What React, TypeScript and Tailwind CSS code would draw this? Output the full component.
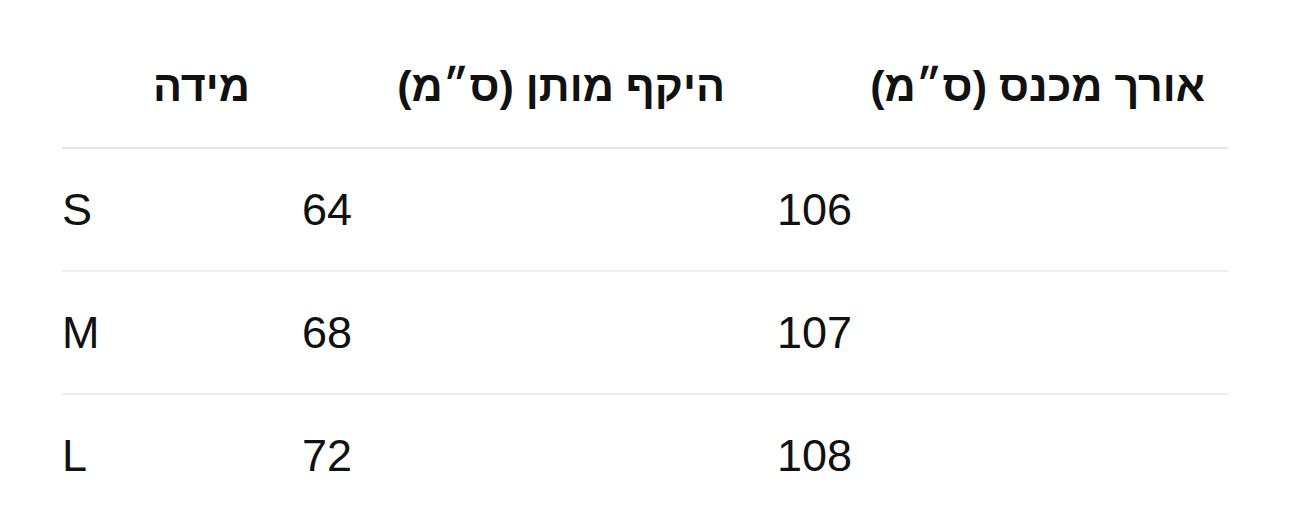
const rows = [
  { size: 'S', waist: '64', length: '106' },
  { size: 'M', waist: '68', length: '107' },
  { size: 'L', waist: '72', length: '108' },
]

export default function App() {
  return (
    <div className="min-h-screen bg-white px-[62px] pt-[25px] text-[#111111] font-['Liberation_Sans',Arial,sans-serif]">
      <table className="w-full border-collapse table-fixed">
        <colgroup>
          <col className="w-[240px]" />
          <col className="w-[475px]" />
          <col />
        </colgroup>
        <thead>
          <tr className="h-[123px] border-b-2 border-[#e6e6e6]">
            <th dir="rtl" className="text-right pr-[52px] text-[43px] font-bold">מידה</th>
            <th dir="rtl" className="text-right pr-[52px] text-[43px] font-bold">היקף מותן (ס״מ)</th>
            <th dir="rtl" className="text-right pr-[23px] text-[43px] font-bold">אורך מכנס (ס״מ)</th>
          </tr>
        </thead>
        <tbody>
          {rows.map((r, i) => (
            <tr
              key={r.size}
              className={`h-[123px] ${i < rows.length - 1 ? 'border-b-2 border-[#eeeeee]' : ''}`}
            >
              <td className="text-left text-[45px]">{r.size}</td>
              <td className="text-left text-[45px]">{r.waist}</td>
              <td className="text-left text-[45px]">{r.length}</td>
            </tr>
          ))}
        </tbody>
      </table>
    </div>
  )
}
